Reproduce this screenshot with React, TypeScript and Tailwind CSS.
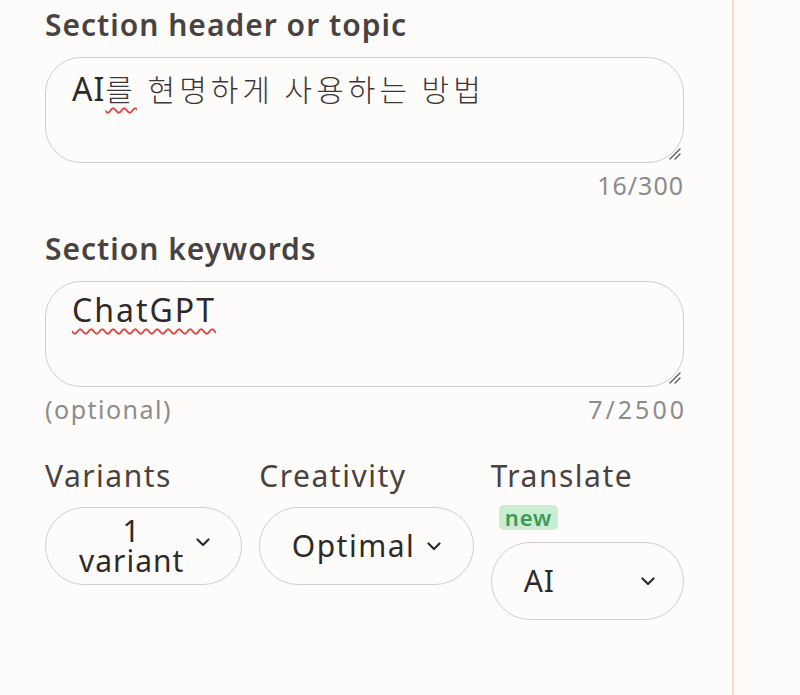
function Chevron() {
  return (
    <svg width="14" height="9" viewBox="0 0 14 9" fill="none" className="shrink-0">
      <path d="M1.5 1.5L7 7l5.5-5.5" stroke="#2f2a2a" strokeWidth="2.2" strokeLinecap="round" strokeLinejoin="round" />
    </svg>
  );
}

function ResizeHandle() {
  return (
    <svg width="14" height="14" viewBox="0 0 14 14" className="absolute right-[2px] bottom-[2px]">
      <path d="M13 3L3 13M13 8L8 13" stroke="#555" strokeWidth="1.3" strokeLinecap="round" />
    </svg>
  );
}

const korean = { fontFamily: "'Noto Sans CJK KR', sans-serif", fontWeight: 300 };

export default function App() {
  return (
    <div
      className="flex w-[800px] h-[695px] bg-[#fdfcfa] text-[#3b3434]"
      style={{ fontFamily: "'Noto Sans', 'Noto Sans CJK KR', sans-serif" }}
    >
      <div className="w-[734px] border-r-2 border-[#fbd8cc] pl-[45px] pr-[48px] pt-[6px]">
        <div className="text-[30px] leading-[38px] tracking-[1px] font-semibold text-[#4a4242]">Section header or topic</div>
        <div className="relative mt-[13px] h-[106px] rounded-[36px] border-[1.5px] border-[#cfcfcd] pl-[26px] pt-[10px] text-[32px] leading-[40px]">
          <span className="tracking-[1px] text-[#2f2a2a]">AI</span>
          <span
            className="text-[30px] tracking-[4px] underline decoration-wavy decoration-[#e04848] decoration-[1.5px] underline-offset-[6px] text-[#3d3838]"
            style={korean}
          >
            를
          </span>
          <span className="text-[30px] tracking-[4px] text-[#3d3838]" style={korean}>
            {" "}현명하게 사용하는 방법
          </span>
          <ResizeHandle />
        </div>
        <div className="mt-[7px] flex justify-end text-[25px] leading-[30px] tracking-[1px] text-[#8e8c8a]">16/300</div>

        <div className="mt-[30px] text-[30px] leading-[38px] tracking-[1px] font-semibold text-[#4a4242]">Section keywords</div>
        <div className="relative mt-[13px] h-[106px] rounded-[36px] border-[1.5px] border-[#cfcfcd] pl-[26px] pt-[8px] text-[32px] leading-[40px]">
          <span className="tracking-[2px] underline decoration-wavy decoration-[#e04848] decoration-[1.5px] underline-offset-[6px] text-[#2f2a2a]">
            ChatGPT
          </span>
          <ResizeHandle />
        </div>
        <div className="mt-[7px] flex justify-between text-[25px] leading-[30px] tracking-[1.5px] text-[#8e8c8a]">
          <span>(optional)</span>
          <span className="tracking-[3px] -mr-[3px]">7/2500</span>
        </div>

        <div className="mt-[33px] flex gap-[17px]">
          <div className="w-[198px]">
            <div className="text-[30px] leading-[38px] tracking-[1.5px] text-[#4a4242]">Variants</div>
            <div className="mt-[12px] flex h-[78px] items-center justify-center gap-[12px] rounded-full border-[1.5px] border-[#cfcfcd] pl-[22px] pr-[20px]">
              <div className="flex flex-col items-center text-[30px] leading-[30px] tracking-[1px] text-[#2f2a2a]">
                <span>1</span>
                <span>variant</span>
              </div>
              <span className="-mt-[8px]">
                <Chevron />
              </span>
            </div>
          </div>
          <div className="w-[215px]">
            <div className="text-[30px] leading-[38px] tracking-[1.5px] text-[#4a4242]">Creativity</div>
            <div className="mt-[12px] flex h-[78px] items-center justify-center gap-[12px] rounded-full border-[1.5px] border-[#cfcfcd] px-[18px]">
              <span className="text-[30px] leading-[32px] tracking-[1.5px] text-[#2f2a2a]">Optimal</span>
              <Chevron />
            </div>
          </div>
          <div className="w-[194px]">
            <div className="text-[30px] leading-[38px] tracking-[1.5px] text-[#4a4242]">Translate</div>
            <div className="mt-[10px] ml-[8px] inline-flex h-[25px] items-center rounded-[5px] bg-[#c9ecd2] px-[6px] text-[22px] leading-[25px] tracking-[1px] font-semibold text-[#3b9a58]">
              new
            </div>
            <div className="mt-[10px] flex h-[78px] items-center justify-between rounded-full border-[1.5px] border-[#cfcfcd] pl-[32px] pr-[28px]">
              <span className="text-[30px] leading-[32px] tracking-[1px] text-[#2f2a2a]">AI</span>
              <Chevron />
            </div>
          </div>
        </div>
      </div>
      <div className="flex-1" />
    </div>
  );
}
